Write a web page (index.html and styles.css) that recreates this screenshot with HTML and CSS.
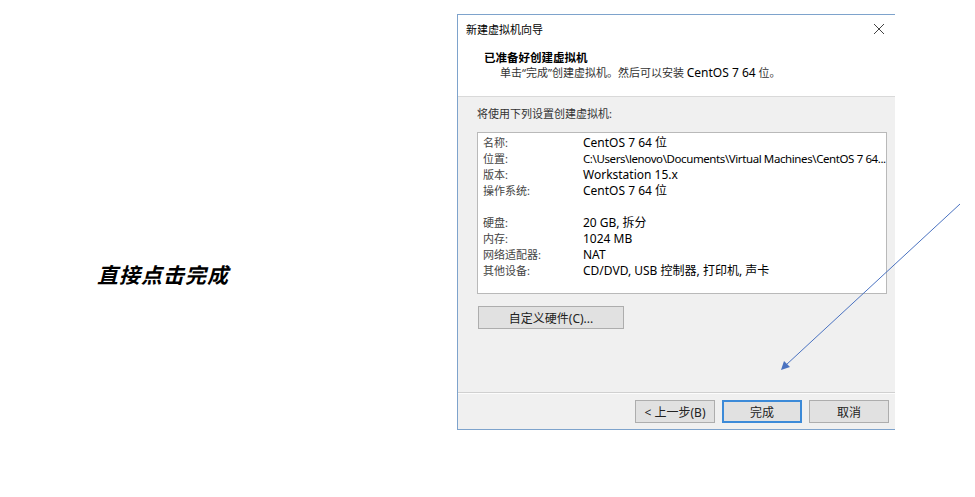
FILE: index.html
```html
<!DOCTYPE html>
<html lang="zh-CN">
<head>
    <meta charset="UTF-8">
    <title>新建虚拟机向导</title>
    <link rel="stylesheet" href="styles.css">
</head>
<body>
    <div class="page">
        <div class="note">直接点击完成</div>
        <div class="wizard">
            <div class="titlebar">
                <span>新建虚拟机向导</span>
                <svg class="close" width="12" height="12" viewBox="0 0 12 12">
                    <path d="M1 1L11 11M11 1L1 11" stroke="#444" stroke-width="1"/>
                </svg>
            </div>
            <div class="head">
                <div class="head-title">已准备好创建虚拟机</div>
                <div class="head-sub">单击“完成”创建虚拟机。然后可以安装 <span class="latin">CentOS 7 64</span> 位。</div>
            </div>
            <div class="body">
                <div class="intro">将使用下列设置创建虚拟机:</div>
                <div class="summary">
                    <div class="row"><span class="key">名称:</span><span class="val">CentOS 7 64 位</span></div>
                    <div class="row"><span class="key">位置:</span><span class="val path">C:\Users\lenovo\Documents\Virtual Machines\CentOS 7 64...</span></div>
                    <div class="row"><span class="key">版本:</span><span class="val">Workstation 15.x</span></div>
                    <div class="row"><span class="key">操作系统:</span><span class="val">CentOS 7 64 位</span></div>
                    <div class="row"></div>
                    <div class="row"><span class="key">硬盘:</span><span class="val">20 GB, 拆分</span></div>
                    <div class="row"><span class="key">内存:</span><span class="val">1024 MB</span></div>
                    <div class="row"><span class="key">网络适配器:</span><span class="val">NAT</span></div>
                    <div class="row"><span class="key">其他设备:</span><span class="val">CD/DVD, USB 控制器, 打印机, 声卡</span></div>
                </div>
                <button class="btn custom">自定义硬件(C)...</button>
            </div>
            <div class="footer">
                <button class="btn">&lt; 上一步(B)</button>
                <button class="btn primary">完成</button>
                <button class="btn">取消</button>
            </div>
        </div>
    </div>
    <!-- pointer from the margin down to the finish button -->
    <svg class="arrow" width="975" height="497" viewBox="0 0 975 497">
        <line x1="960" y1="204" x2="786" y2="365" stroke="#4a72c0" stroke-width="1"/>
        <polygon points="781,370 784,361 790,367" fill="#4a72c0"/>
    </svg>
</body>
</html>
```

FILE: styles.css
```css
body {
    margin: 0;
    background: #fff;
    font-family: "Noto Sans", "Noto Sans CJK SC", sans-serif;
    font-size: 12px;
    color: #000;
}
.page {
    display: flex;
    padding-top: 14px;
    height: 483px;
}
.note {
    width: 360px;
    padding: 248px 0 0 97px;
    font-size: 21px;
    font-weight: bold;
    font-style: italic;
    letter-spacing: 1px;
    line-height: 24px;
    font-family: "Noto Sans CJK SC", sans-serif;
}
.wizard {
    width: 437px;
    height: 414px;
    border: 1px solid #7ea3cc;
    border-right: none;
    background: #f0f0f0;
    display: flex;
    flex-direction: column;
}
.titlebar {
    height: 28px;
    background: #fff;
    display: flex;
    justify-content: space-between;
    align-items: center;
    padding: 0 8px;
    font-family: "Noto Sans CJK SC", sans-serif;
    font-size: 11px;
}
.close {
    margin-right: 2px;
}
.head {
    height: 54px;
    background: #fff;
    border-bottom: 1px solid #d9d9d9;
    padding-left: 26px;
    box-sizing: border-box;
}
.head-title {
    font-weight: bold;
    font-family: "Noto Sans CJK SC", sans-serif;
    font-size: 11.5px;
    line-height: 16px;
    padding-top: 6px;
}
.head-sub {
    padding-left: 16px;
    line-height: 16px;
    font-size: 11px;
    color: #333;
}
.latin {
    font-size: 12px;
    color: #000;
}
.body {
    flex: 1;
    padding: 9px 8px 0 19px;
    border-bottom: 1px solid #d0d0d0;
}
.intro {
    line-height: 16px;
    font-size: 11px;
    color: #333;
}
.summary {
    margin-top: 10px;
    height: 162px;
    background: #fff;
    border: 1px solid #b9b9b9;
    padding: 2px 0 0 5px;
    box-sizing: border-box;
}
.row {
    display: flex;
    height: 16px;
    line-height: 16px;
    white-space: nowrap;
}
.key {
    width: 100px;
    flex-shrink: 0;
    font-size: 11px;
    color: #444;
}
.val {
    padding-right: 4px;
}
.path {
    font-size: 11.5px;
    letter-spacing: -0.4px;
}
.btn {
    font-family: "Noto Sans", "Noto Sans CJK SC", sans-serif;
    font-size: 12px;
    height: 23px;
    width: 80px;
    background: #e1e1e1;
    border: 1px solid #adadad;
    color: #222;
    padding: 0;
}
.custom {
    margin: 12px 0 0 1px;
    width: 146px;
}
.footer {
    height: 36px;
    border-top: 1px solid #fcfcfc;
    display: flex;
    justify-content: flex-end;
    align-items: center;
    gap: 7px;
    padding-right: 6px;
    box-sizing: border-box;
}
.primary {
    border: 2px solid #3c8ad8;
}
.arrow {
    position: absolute;
    left: 0;
    top: 0;
    pointer-events: none;
}
```
